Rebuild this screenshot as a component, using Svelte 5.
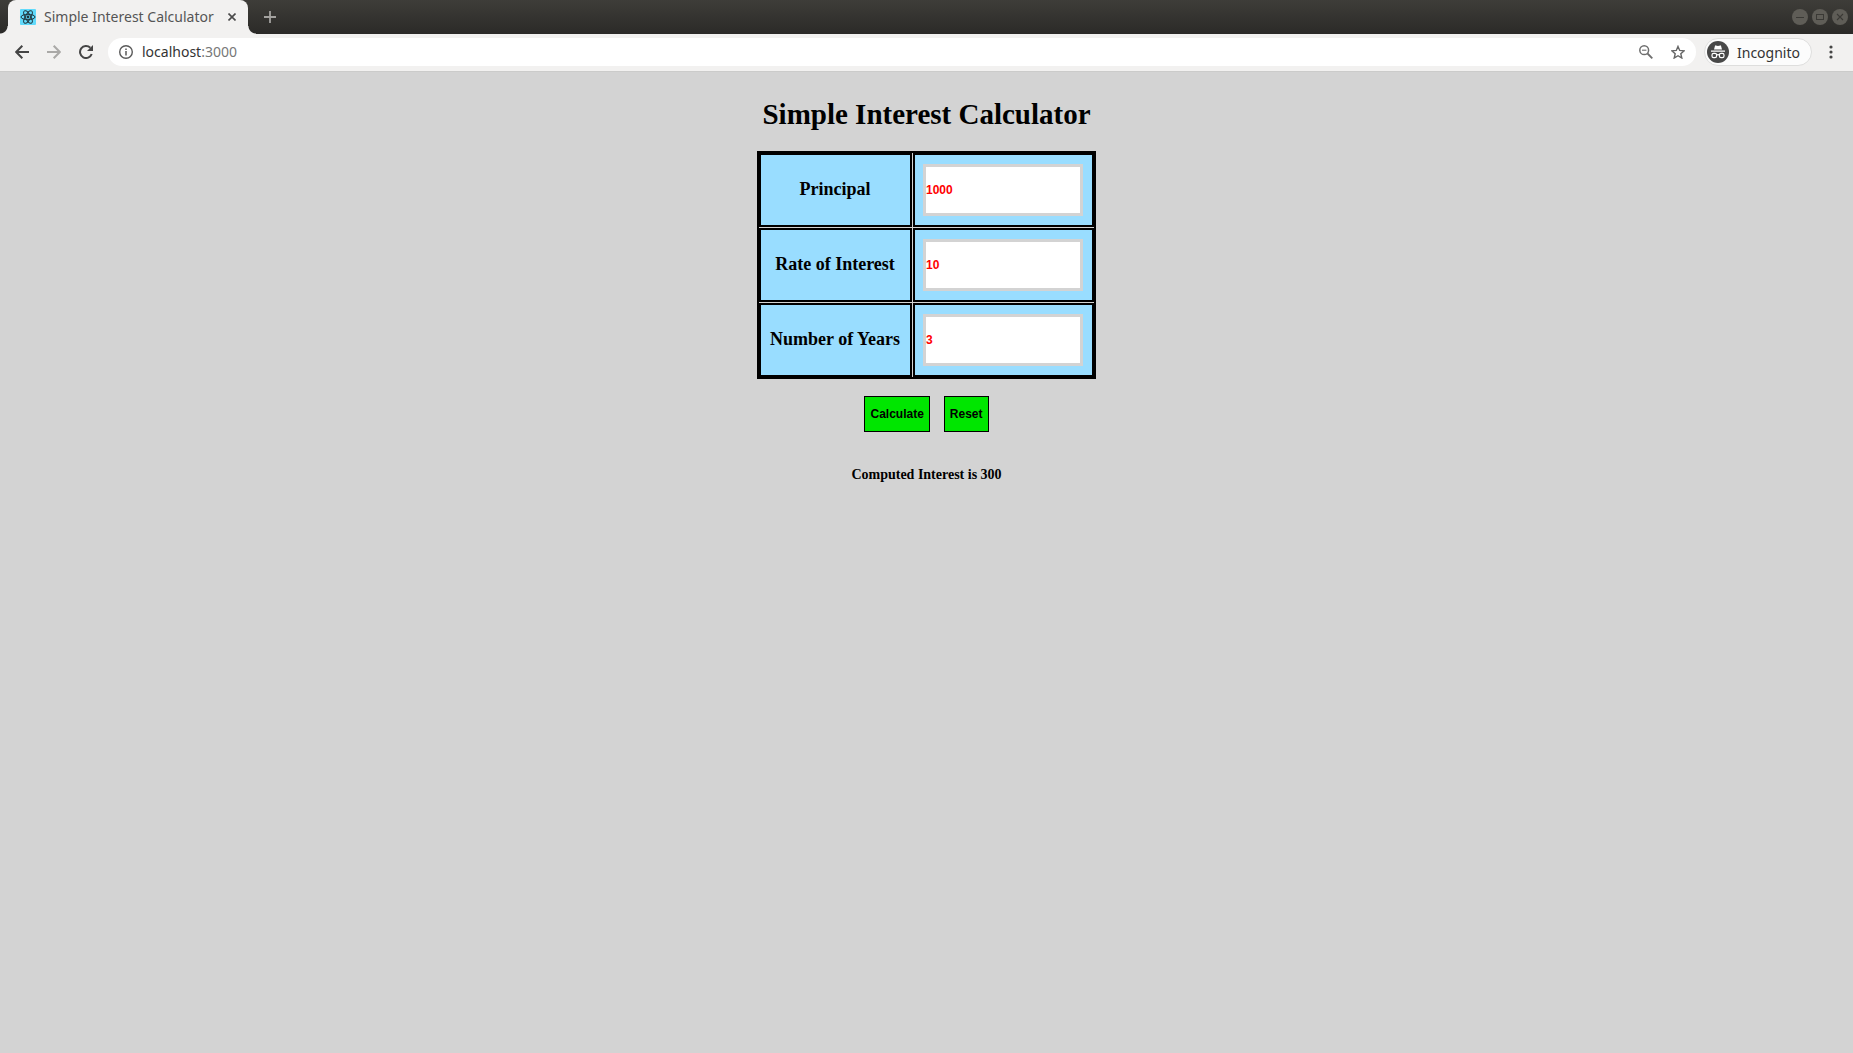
<script>
  const defaults = { principal: 1000, rate: 10, years: 3 };
  let principal = $state(defaults.principal);
  let rate = $state(defaults.rate);
  let years = $state(defaults.years);
  let interest = $state(300);

  function calculate() {
    interest = (principal * rate * years) / 100;
  }
  function reset() {
    principal = 0;
    rate = 0;
    years = 0;
    interest = 0;
  }
</script>

<div class="browser">
  <header class="tabs">
    <div class="lead"></div>
    <div class="tab">
      <svg class="favicon" viewBox="0 0 16 16" width="16" height="16" aria-hidden="true">
        <rect width="16" height="16" rx="1" fill="#61dafb" />
        <g fill="none" stroke="#20343c" stroke-width="1">
          <ellipse cx="8" cy="8" rx="7" ry="2.7" />
          <ellipse cx="8" cy="8" rx="7" ry="2.7" transform="rotate(60 8 8)" />
          <ellipse cx="8" cy="8" rx="7" ry="2.7" transform="rotate(120 8 8)" />
        </g>
        <circle cx="8" cy="8" r="1.4" fill="#20343c" />
      </svg>
      <span class="tab-title">Simple Interest Calculator</span>
      <button class="icon close" aria-label="Close tab">
        <svg viewBox="0 0 8 8" width="8" height="8"><path d="M.5.5l7 7M7.5.5l-7 7" stroke="#4a4a4a" stroke-width="1.6" /></svg>
      </button>
    </div>
    <button class="icon new-tab" aria-label="New tab">
      <svg viewBox="0 0 12 12" width="12" height="12"><path d="M6 0v12M0 6h12" stroke="#a3a29f" stroke-width="1.8" /></svg>
    </button>
    <div class="window-controls">
      <button class="icon" aria-label="Minimize">
        <svg viewBox="0 0 16 16" width="16" height="16"><circle cx="8" cy="8" r="8" fill="#5f5d57" /><path d="M4 8.5h8" stroke="#3a3935" /></svg>
      </button>
      <button class="icon" aria-label="Maximize">
        <svg viewBox="0 0 16 16" width="16" height="16"><circle cx="8" cy="8" r="8" fill="#5f5d57" /><rect x="4.5" y="5.5" width="7" height="5" fill="none" stroke="#3a3935" /></svg>
      </button>
      <button class="icon" aria-label="Close window">
        <svg viewBox="0 0 16 16" width="16" height="16"><circle cx="8" cy="8" r="8" fill="#5f5d57" /><path d="M5 5l6 6M11 5l-6 6" stroke="#3a3935" stroke-width="1.1" /></svg>
      </button>
    </div>
  </header>

  <nav class="toolbar">
    <button class="icon" aria-label="Back">
      <svg viewBox="0 0 14 14" width="14" height="14" fill="none" stroke="#454545" stroke-width="2"><path d="M14 7H1.5M7.3.7L1.2 7l6.1 6.3" /></svg>
    </button>
    <button class="icon forward" aria-label="Forward" disabled>
      <svg viewBox="0 0 14 14" width="14" height="14" fill="none" stroke="#aaa9a7" stroke-width="2"><path d="M0 7h12.5M6.7.7L12.8 7l-6.1 6.3" /></svg>
    </button>
    <button class="icon reload" aria-label="Reload">
      <svg viewBox="0 0 14 14" width="14" height="14"><path d="M12.7 9A6 6 0 1 1 11.3 2.8" fill="none" stroke="#454545" stroke-width="2" /><path d="M14 0v6H8z" fill="#454545" /></svg>
    </button>
    <div class="address">
      <svg viewBox="0 0 14 14" width="14" height="14" aria-hidden="true"><circle cx="7" cy="7" r="6.3" fill="none" stroke="#5a5a5a" stroke-width="1.4" /><path d="M7 6v4.5M7 3.5V5" stroke="#5a5a5a" stroke-width="1.5" /></svg>
      <span class="url">localhost<span class="port">:3000</span></span>
      <button class="icon" aria-label="Zoom">
        <svg viewBox="0 0 14 14" width="14" height="14" fill="none" stroke="#6e6e6e"><circle cx="5.2" cy="5.2" r="4.4" stroke-width="1.5" /><path d="M8.500 8.500l4.800 4.800" stroke-width="1.8" /><path d="M3 5.2h4.4" stroke-width="1.1" /></svg>
      </button>
      <button class="icon star" aria-label="Bookmark this page">
        <svg viewBox="0 0 14 14" width="14" height="14"><path d="M7 1.400l1.700 4 4.400.4-3.300 2.900 1 4.300L7 10.700l-3.800 2.300 1-4.300L.9 5.800l4.400-.4z" fill="none" stroke="#666" stroke-width="1.4" /></svg>
      </button>
    </div>
    <button class="incognito">
      <svg viewBox="0 0 22 22" width="22" height="22" aria-hidden="true">
        <circle cx="11" cy="11" r="11" fill="#484848" />
        <path d="M7 8.500l1-3.700q.2-.6.900-.4l2.100.5 2.100-.5q.7-.2.900.4l1 3.700zM4 9.500h14v1.200H4z" fill="#fff" />
        <g fill="none" stroke="#fff" stroke-width="1.200"><rect x="5" y="12.400" width="4.600" height="4.200" rx="1.600" /><rect x="12.400" y="12.400" width="4.600" height="4.200" rx="1.600" /><path d="M9.600 14q1.400-.8 2.800 0" /></g>
      </svg>
      <span>Incognito</span>
    </button>
    <button class="icon menu" aria-label="Menu">
      <svg viewBox="0 0 4 14" width="4" height="14" fill="#454545"><circle cx="2" cy="2" r="1.600" /><circle cx="2" cy="7" r="1.600" /><circle cx="2" cy="12" r="1.600" /></svg>
    </button>
  </nav>

  <main>
    <h1>Simple Interest Calculator</h1>
    <table>
      <tbody>
        <tr>
          <th scope="row"><label for="principal">Principal</label></th>
          <td><input id="principal" type="text" inputmode="decimal" bind:value={principal} /></td>
        </tr>
        <tr>
          <th scope="row"><label for="rate">Rate of Interest</label></th>
          <td><input id="rate" type="text" inputmode="decimal" bind:value={rate} /></td>
        </tr>
        <tr>
          <th scope="row"><label for="years">Number of Years</label></th>
          <td><input id="years" type="text" inputmode="decimal" bind:value={years} /></td>
        </tr>
      </tbody>
    </table>
    <div class="actions">
      <button class="action" onclick={calculate}>Calculate</button>
      <button class="action" onclick={reset}>Reset</button>
    </div>
    <h4>Computed Interest is {interest}</h4>
  </main>
</div>

<style>
  :global(body) {
    background: #d3d3d3;
  }
  .browser {
    font-family: "Noto Sans", "Open Sans", sans-serif;
  }
  button {
    margin: 0;
    font: inherit;
  }
  svg {
    display: block;
  }
  .icon {
    display: block;
    padding: 0;
    border: 0;
    background: none;
  }
  .tabs {
    display: flex;
    height: 34px;
    background: linear-gradient(#3e3d39, #2b2a28);
  }
  .lead {
    width: 8px;
    background: radial-gradient(circle at 0 0, transparent 7px, #f2f1f0 8px) 0 100% / 8px 8px no-repeat;
  }
  .tab {
    position: relative;
    display: flex;
    align-items: center;
    width: 240px;
    box-sizing: border-box;
    padding: 0 12px;
    border-radius: 8px 8px 0 0;
    background: #f2f1f0;
  }
  .tab::after {
    content: "";
    position: absolute;
    left: 100%;
    bottom: 0;
    width: 8px;
    height: 8px;
    background: radial-gradient(circle at 100% 0, transparent 7px, #f2f1f0 8px);
  }
  .tab-title {
    flex: 1;
    margin-left: 8px;
    padding-bottom: 2px;
    color: #555;
    font-size: 14px;
    white-space: nowrap;
  }
  .new-tab {
    margin-left: 16px;
  }
  .window-controls {
    display: flex;
    align-items: center;
    gap: 4px;
    margin-left: auto;
    padding-right: 5px;
  }
  .toolbar {
    display: flex;
    align-items: center;
    height: 38px;
    box-sizing: border-box;
    padding: 0 20px 1px 15px;
    border-bottom: 1px solid #cbcbca;
    background: #f2f1f0;
  }
  .forward,
  .reload {
    margin-left: 18px;
  }
  .address {
    display: flex;
    flex: 1;
    align-items: center;
    height: 28px;
    margin-left: 15px;
    padding: 0 11px;
    border-radius: 14px;
    background: #fff;
  }
  .url {
    flex: 1;
    margin-left: 9px;
    padding-bottom: 1px;
    color: #333;
    font-size: 14px;
  }
  .port {
    color: #777;
  }
  .star {
    margin-left: 18px;
  }
  .incognito {
    display: flex;
    align-items: center;
    gap: 8px;
    height: 28px;
    margin-left: 8px;
    padding: 0 11px 0 2px;
    border: 1px solid #dededd;
    border-radius: 14px;
    background: #fcfcfc;
    color: #333;
    font-size: 14px;
  }
  .menu {
    margin-left: 17px;
  }
  main {
    display: flex;
    flex-direction: column;
    align-items: center;
    padding-top: 25px;
    color: #000;
    font-family: "Liberation Serif", "Times New Roman", serif;
  }
  h1 {
    margin: 0 0 20px;
    font-size: 29px;
    line-height: 34px;
  }
  table {
    border: 1px solid #000;
    border-spacing: 1px;
    box-shadow: inset 0 0 0 1px #000;
  }
  th,
  td {
    border: 2px solid #000;
    background: #99ddff;
  }
  th {
    padding: 0 10px 2px 9px;
    font-size: 18px;
  }
  td {
    padding: 9px 9px 9px 8px;
  }
  input {
    display: block;
    width: 160px;
    height: 52px;
    box-sizing: border-box;
    padding: 0;
    border: 3px solid #d3d3d3;
    background: #fff;
    color: #f00;
    font: bold 12px "Liberation Sans", Arial, sans-serif;
  }
  .actions {
    display: flex;
    gap: 14px;
    margin-top: 17px;
  }
  .action {
    height: 36px;
    padding: 0 5px;
    border: 1px solid #000;
    background: #00e600;
    color: #000;
    font: bold 12px "Liberation Sans", Arial, sans-serif;
  }
  h4 {
    margin: 35px 0 0;
    font-size: 14px;
    line-height: 16px;
  }
</style>
